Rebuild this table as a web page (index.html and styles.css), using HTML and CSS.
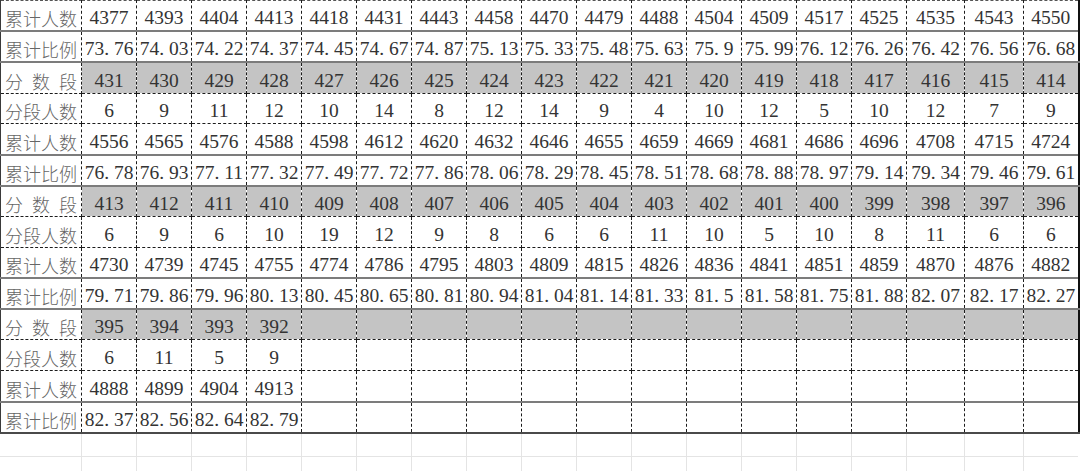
FILE: index.html
```html
<!DOCTYPE html>
<html lang="zh-CN">
<head>
<meta charset="utf-8">
<title>分数段统计表</title>
<link rel="stylesheet" href="styles.css">
</head>
<body>
<table class="sheet">
  <colgroup>
    <col class="lab"><col class="d"><col class="d"><col class="d"><col class="d"><col class="d"><col class="d"><col class="d"><col class="d"><col class="d"><col class="d"><col class="d"><col class="d"><col class="d"><col class="d"><col class="d"><col class="w1"><col class="w2"><col class="d"><col class="d">
  </colgroup>
  <tbody>
    <tr class="cum">
      <td class="lab">累计人数</td><td>4377</td><td>4393</td><td>4404</td><td>4413</td><td>4418</td><td>4431</td><td>4443</td><td>4458</td><td>4470</td><td>4479</td><td>4488</td><td>4504</td><td>4509</td><td>4517</td><td>4525</td><td>4535</td><td>4543</td><td>4550</td>
    </tr>
    <tr class="ratio">
      <td class="lab">累计比例</td><td>73<span class="pt">.</span>76</td><td>74<span class="pt">.</span>03</td><td>74<span class="pt">.</span>22</td><td>74<span class="pt">.</span>37</td><td>74<span class="pt">.</span>45</td><td>74<span class="pt">.</span>67</td><td>74<span class="pt">.</span>87</td><td>75<span class="pt">.</span>13</td><td>75<span class="pt">.</span>33</td><td>75<span class="pt">.</span>48</td><td>75<span class="pt">.</span>63</td><td>75<span class="pt">.</span>9</td><td>75<span class="pt">.</span>99</td><td>76<span class="pt">.</span>12</td><td>76<span class="pt">.</span>26</td><td>76<span class="pt">.</span>42</td><td>76<span class="pt">.</span>56</td><td>76<span class="pt">.</span>68</td>
    </tr>
    <tr class="score">
      <td class="lab">分数段</td><td>431</td><td>430</td><td>429</td><td>428</td><td>427</td><td>426</td><td>425</td><td>424</td><td>423</td><td>422</td><td>421</td><td>420</td><td>419</td><td>418</td><td>417</td><td>416</td><td>415</td><td>414</td>
    </tr>
    <tr class="count">
      <td class="lab">分段人数</td><td>6</td><td>9</td><td>11</td><td>12</td><td>10</td><td>14</td><td>8</td><td>12</td><td>14</td><td>9</td><td>4</td><td>10</td><td>12</td><td>5</td><td>10</td><td>12</td><td>7</td><td>9</td>
    </tr>
    <tr class="cum">
      <td class="lab">累计人数</td><td>4556</td><td>4565</td><td>4576</td><td>4588</td><td>4598</td><td>4612</td><td>4620</td><td>4632</td><td>4646</td><td>4655</td><td>4659</td><td>4669</td><td>4681</td><td>4686</td><td>4696</td><td>4708</td><td>4715</td><td>4724</td>
    </tr>
    <tr class="ratio">
      <td class="lab">累计比例</td><td>76<span class="pt">.</span>78</td><td>76<span class="pt">.</span>93</td><td>77<span class="pt">.</span>11</td><td>77<span class="pt">.</span>32</td><td>77<span class="pt">.</span>49</td><td>77<span class="pt">.</span>72</td><td>77<span class="pt">.</span>86</td><td>78<span class="pt">.</span>06</td><td>78<span class="pt">.</span>29</td><td>78<span class="pt">.</span>45</td><td>78<span class="pt">.</span>51</td><td>78<span class="pt">.</span>68</td><td>78<span class="pt">.</span>88</td><td>78<span class="pt">.</span>97</td><td>79<span class="pt">.</span>14</td><td>79<span class="pt">.</span>34</td><td>79<span class="pt">.</span>46</td><td>79<span class="pt">.</span>61</td>
    </tr>
    <tr class="score">
      <td class="lab">分数段</td><td>413</td><td>412</td><td>411</td><td>410</td><td>409</td><td>408</td><td>407</td><td>406</td><td>405</td><td>404</td><td>403</td><td>402</td><td>401</td><td>400</td><td>399</td><td>398</td><td>397</td><td>396</td>
    </tr>
    <tr class="count">
      <td class="lab">分段人数</td><td>6</td><td>9</td><td>6</td><td>10</td><td>19</td><td>12</td><td>9</td><td>8</td><td>6</td><td>6</td><td>11</td><td>10</td><td>5</td><td>10</td><td>8</td><td>11</td><td>6</td><td>6</td>
    </tr>
    <tr class="cum">
      <td class="lab">累计人数</td><td>4730</td><td>4739</td><td>4745</td><td>4755</td><td>4774</td><td>4786</td><td>4795</td><td>4803</td><td>4809</td><td>4815</td><td>4826</td><td>4836</td><td>4841</td><td>4851</td><td>4859</td><td>4870</td><td>4876</td><td>4882</td>
    </tr>
    <tr class="ratio">
      <td class="lab">累计比例</td><td>79<span class="pt">.</span>71</td><td>79<span class="pt">.</span>86</td><td>79<span class="pt">.</span>96</td><td>80<span class="pt">.</span>13</td><td>80<span class="pt">.</span>45</td><td>80<span class="pt">.</span>65</td><td>80<span class="pt">.</span>81</td><td>80<span class="pt">.</span>94</td><td>81<span class="pt">.</span>04</td><td>81<span class="pt">.</span>14</td><td>81<span class="pt">.</span>33</td><td>81<span class="pt">.</span>5</td><td>81<span class="pt">.</span>58</td><td>81<span class="pt">.</span>75</td><td>81<span class="pt">.</span>88</td><td>82<span class="pt">.</span>07</td><td>82<span class="pt">.</span>17</td><td>82<span class="pt">.</span>27</td>
    </tr>
    <tr class="score">
      <td class="lab">分数段</td><td>395</td><td>394</td><td>393</td><td>392</td><td></td><td></td><td></td><td></td><td></td><td></td><td></td><td></td><td></td><td></td><td></td><td></td><td></td><td></td>
    </tr>
    <tr class="count">
      <td class="lab">分段人数</td><td>6</td><td>11</td><td>5</td><td>9</td><td></td><td></td><td></td><td></td><td></td><td></td><td></td><td></td><td></td><td></td><td></td><td></td><td></td><td></td>
    </tr>
    <tr class="cum">
      <td class="lab">累计人数</td><td>4888</td><td>4899</td><td>4904</td><td>4913</td><td></td><td></td><td></td><td></td><td></td><td></td><td></td><td></td><td></td><td></td><td></td><td></td><td></td><td></td>
    </tr>
    <tr class="ratio last">
      <td class="lab">累计比例</td><td>82<span class="pt">.</span>37</td><td>82<span class="pt">.</span>56</td><td>82<span class="pt">.</span>64</td><td>82<span class="pt">.</span>79</td><td></td><td></td><td></td><td></td><td></td><td></td><td></td><td></td><td></td><td></td><td></td><td></td><td></td><td></td>
    </tr>
  </tbody>
</table>
<table class="grid">
  <colgroup>
    <col class="lab"><col class="d"><col class="d"><col class="d"><col class="d"><col class="d"><col class="d"><col class="d"><col class="d"><col class="d"><col class="d"><col class="d"><col class="d"><col class="d"><col class="d"><col class="d"><col class="w1"><col class="w2"><col class="d"><col class="d">
  </colgroup>
  <tbody>
    <tr><td></td><td></td><td></td><td></td><td></td><td></td><td></td><td></td><td></td><td></td><td></td><td></td><td></td><td></td><td></td><td></td><td></td><td></td><td></td></tr>
    <tr><td></td><td></td><td></td><td></td><td></td><td></td><td></td><td></td><td></td><td></td><td></td><td></td><td></td><td></td><td></td><td></td><td></td><td></td><td></td></tr>
  </tbody>
</table>
</body>
</html>
```

FILE: styles.css
```css
html, body {
  margin: 0;
  padding: 0;
  background: #ffffff;
}

body {
  width: 1080px;
  height: 471px;
  overflow: hidden;
}

col.lab { width: 81px; }
col.d { width: 55px; }
col.w1 { width: 58px; }
col.w2 { width: 59px; }

.sheet {
  border-collapse: collapse;
  table-layout: fixed;
  width: 1079px;
  font-family: "Liberation Serif", "Tinos", "Times New Roman", "DejaVu Serif", serif;
  font-size: 19.5px;
  color: #333333;
}

.sheet tr {
  height: 30.86px;
}

.sheet td {
  font-family: "Liberation Serif", "Tinos", "Times New Roman", "DejaVu Serif", serif;
  border: 1px dashed #1c1c1c;
  padding: 0 0 2px 0;
  text-align: center;
  vertical-align: bottom;
  line-height: 20px;
  white-space: nowrap;
  overflow: hidden;
}

.sheet td:first-child {
  border-left: 1px solid #3a3a3a;
}

.sheet td:last-child {
  border-right: 2px solid #111111;
}

.sheet tr:first-child td {
  border-top: 1px dashed #555555;
}

.sheet tr.ratio td {
  border-top: 2px solid #7c7c7c;
  border-bottom: 2px solid #7c7c7c;
}

.sheet tr.last td {
  border-bottom: 2px solid #4a4a4a;
}

.sheet tr.score td {
  background: #c4c4c4;
}

.sheet tr.score td.lab {
  background: #ffffff;
}

.sheet td.lab {
  font-family: "Noto Sans CJK SC", sans-serif;
  font-size: 18px;
  font-weight: 300;
  color: #666666;
  text-align: justify;
  text-align-last: justify;
  padding: 0 4px 2px 4px;
}

.pt {
  letter-spacing: 0.25em;
}

.grid {
  border-collapse: collapse;
  table-layout: fixed;
  width: 1079px;
}

.grid tr {
  height: 23px;
}

.grid td {
  border-right: 1px solid #e4e4e4;
  border-bottom: 1px solid #e4e4e4;
  padding: 0;
}

.grid td:last-child {
  border-right: none;
}
```
